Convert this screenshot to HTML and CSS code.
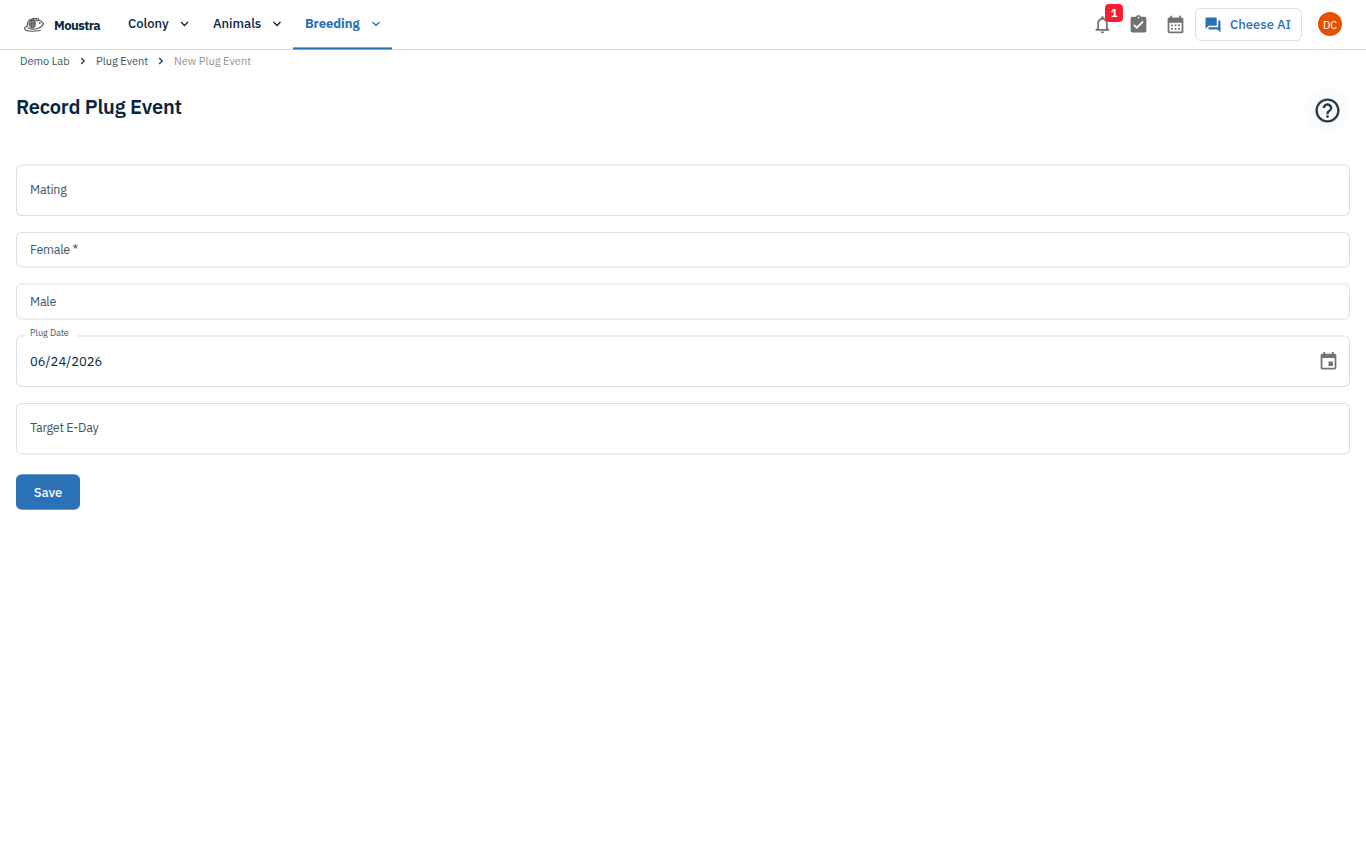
FILE: index.html
```html
<!DOCTYPE html>
<html lang="en">
<head>
  <meta charset="UTF-8" />
  <meta name="viewport" content="width=device-width, initial-scale=1.0"/>
  <title>Moustra - Record Plug Event</title>
  <link rel="stylesheet" href="styles.css">
</head>
<body>
  <header class="topbar">
    <a class="brand" href="#">
      <svg class="logo" viewBox="0 0 20 16" fill="none" stroke="#555" stroke-width="1.1" stroke-linecap="round">
        <path d="M7 2.200C4.500 2.600 3 5.500 3.400 9"/>
        <path d="M3.200 9.300C.2 9.800-.2 12 2 13.200c3.500 1.500 8.500 1.200 14.500.3"/>
        <path d="M4 10.800c2.500 1.700 7 1.500 10.500.5 2.500-.8 4.300-3 5-4.800-1-1.800-2.600-2.800-4.800-3.600"/>
        <ellipse cx="8.200" cy="6.500" rx="3" ry="4.200" fill="#999"/>
        <path d="M7.500 2.800v7.500M9.300 3v7M5 6.800h6" stroke-width=".8"/>
        <path d="M8.500 1.800c1.500-.6 2.800-.4 3.800.4"/>
        <circle cx="13.300" cy="2.600" r="1.300"/>
        <circle cx="15.800" cy="6" r=".4" fill="#333"/>
      </svg>
      <span class="brand-name">Moustra</span>
    </a>

    <nav class="nav">
      <button class="nav-item colony"><span>Colony</span><svg class="chevron" viewBox="0 0 10 6"><path d="M1 1l3.500 3.500L8 1"/></svg></button>
      <button class="nav-item animals"><span>Animals</span><svg class="chevron" viewBox="0 0 10 6"><path d="M1.500 1L5 4.500 8.500 1"/></svg></button>
      <button class="nav-item breeding active"><span>Breeding</span><svg class="chevron" viewBox="0 0 10 6"><path d="M1.500 1L5 4.500 8.500 1"/></svg></button>
    </nav>

    <div class="actions">
      <button class="icon-btn">
        <svg viewBox="0 0 24 24"><path d="M12 22c1.100 0 2-.9 2-2h-4c0 1.100.9 2 2 2zm6-6v-5c0-3.070-1.630-5.640-4.500-6.320V4c0-.83-.67-1.500-1.500-1.500s-1.500.67-1.500 1.500v.68C7.640 5.360 6 7.920 6 11v5l-2 2v1h16v-1l-2-2zm-2 1H8v-6c0-2.480 1.510-4.500 4-4.500s4 2.020 4 4.500v6z"/></svg>
        <span class="badge">1</span>
      </button>
      <button class="icon-btn">
        <svg viewBox="0 0 24 24"><path d="M19 3h-4.180C14.400 1.840 13.300 1 12 1s-2.400.84-2.820 2H5c-1.100 0-2 .9-2 2v14c0 1.100.9 2 2 2h14c1.100 0 2-.9 2-2V5c0-1.100-.9-2-2-2zm-7 0c.55 0 1 .45 1 1s-.45 1-1 1-1-.45-1-1 .45-1 1-1zm-2 14l-4-4 1.410-1.410L10 14.170l6.590-6.590L18 9l-8 8z"/></svg>
      </button>
      <button class="icon-btn calendar-btn">
        <svg viewBox="0 0 24 24"><path fill-rule="evenodd" d="M19 4h-1V2h-2v2H8V2H6v2H5c-1.110 0-2 .9-2 2v14c0 1.100.89 2 2 2h14c1.100 0 2-.9 2-2V6c0-1.100-.9-2-2-2zm0 16H5V10h14v10zM7 12h2v2H7zm4 0h2v2h-2zm4 0h2v2h-2zM7 16h2v2H7zm4 0h2v2h-2zm4 0h2v2h-2z"/></svg>
      </button>
      <button class="cheese-btn">
        <svg viewBox="0 0 24 24"><path d="M21 6h-2v9H6v2c0 .55.45 1 1 1h11l4 4V7c0-.55-.45-1-1-1zm-4 6V3c0-.55-.45-1-1-1H3c-.55 0-1 .45-1 1v14l4-4h10c.55 0 1-.45 1-1z"/></svg>
        <span>Cheese AI</span>
      </button>
      <div class="avatar">DC</div>
    </div>
  </header>

  <div class="breadcrumbs">
    <a class="crumb-lab" href="#">Demo Lab</a>
    <svg viewBox="0 0 6 8"><path d="M1.200 1l3 3-3 3"/></svg>
    <a class="crumb-plug" href="#">Plug Event</a>
    <svg viewBox="0 0 6 8"><path d="M1.200 1l3 3-3 3"/></svg>
    <span class="current">New Plug Event</span>
  </div>

  <main>
    <div class="page-head">
      <h1>Record Plug Event</h1>
      <button class="help-btn">
        <svg viewBox="0 0 24 24"><path d="M11 18h2v-2h-2v2zm1-16C6.480 2 2 6.480 2 12s4.480 10 10 10 10-4.480 10-10S17.520 2 12 2zm0 18c-4.410 0-8-3.590-8-8s3.590-8 8-8 8 3.590 8 8-3.590 8-8 8zm0-14c-2.210 0-4 1.790-4 4h2c0-1.100.9-2 2-2s2 .9 2 2c0 2-3 1.750-3 5h2c0-2.250 3-2.500 3-5 0-2.210-1.790-4-4-4z"/></svg>
      </button>
    </div>

    <form>
      <div class="field mating"><label>Mating</label></div>
      <div class="field female"><label>Female *</label></div>
      <div class="field male"><label>Male</label></div>
      <div class="field date">
        <label class="float-label">Plug Date</label>
        <span class="value">06/24/2026</span>
        <svg class="date-icon" viewBox="0 0 24 24"><path d="M17 12h-5v5h5v-5zM16 1v2H8V1H6v2H5c-1.110 0-1.990.9-1.990 2L3 19c0 1.100.89 2 2 2h14c1.100 0 2-.9 2-2V5c0-1.100-.9-2-2-2h-1V1h-2zm3 18H5V8h14v11z"/></svg>
      </div>
      <div class="field target"><label>Target E-Day</label></div>
      <button type="button" class="save-btn">Save</button>
    </form>
  </main>
</body>
</html>
```
FILE: styles.css
```css
* {
  box-sizing: border-box;
}

body {
  margin: 0;
  background-color: #fff;
  color: #05263f;
  font-family: 'IBM Plex Sans', Roboto, 'Noto Sans', sans-serif;
  font-size: 12px;
}

button {
  padding: 0;
  border: none;
  background: none;
  color: inherit;
  font-family: inherit;
  cursor: pointer;
}

a {
  color: inherit;
  text-decoration: none;
}

svg {
  display: block;
  flex-shrink: 0;
}

.topbar {
  display: flex;
  height: 50px;
  padding-left: 24px;
  padding-right: 24px;
  border-bottom: 1px solid #d9dbdc;
}

.brand {
  display: flex;
  align-items: center;
  width: 92px;
}

.logo {
  width: 20px;
  height: 16px;
  margin-right: 10px;
}

.brand-name {
  padding-top: 2px;
  font-size: 13px;
  font-weight: 700;
  letter-spacing: -0.5px;
}

.nav {
  display: flex;
}

.nav-item {
  display: flex;
  justify-content: space-between;
  align-items: center;
  height: 50px;
  padding: 0 11px 2px 12px;
  border-bottom: 1px solid transparent;
  font-size: 13px;
  font-weight: 500;
}

.colony {
  width: 85px;
}

.animals {
  width: 92px;
}

.breeding {
  width: 99px;
}

.nav-item.active {
  color: #2a71b8;
  border-bottom-color: #7fa9d3;
  box-shadow: inset 0 -1px #2a71b8, inset 0 -2px #7fa9d3;
  font-weight: 700;
  letter-spacing: -0.05px;
}

.chevron {
  width: 10px;
  height: 6px;
  fill: none;
  stroke: currentColor;
  stroke-width: 1.3;
}

.actions {
  display: flex;
  align-items: center;
  margin-left: auto;
}

.icon-btn {
  position: relative;
  width: 36px;
  color: #737373;
}

.icon-btn svg {
  width: 21px;
  height: 21px;
  margin-left: 7px;
  fill: currentColor;
}

.calendar-btn svg {
  margin-left: 7.5px;
}

.badge {
  position: absolute;
  top: -10px;
  right: -2px;
  width: 18px;
  height: 18px;
  border-radius: 4px;
  background: #f8202e;
  color: #fff;
  font-size: 11px;
  font-weight: 700;
  line-height: 18px;
}

.cheese-btn {
  display: flex;
  align-items: center;
  width: 107px;
  height: 33px;
  margin: 0 16px 0 2px;
  padding-left: 8px;
  border: 1px solid #dadfe4;
  border-radius: 6px;
  color: #2a71b8;
  font-size: 13px;
  font-weight: 500;
}

.cheese-btn svg {
  width: 18px;
  height: 18px;
  margin-right: 8px;
  fill: currentColor;
}

.avatar {
  width: 24px;
  height: 24px;
  margin-top: -1px;
  border-radius: 50%;
  background: #e65100;
  color: #fff;
  font-size: 11px;
  line-height: 26px;
  text-align: center;
}

.breadcrumbs {
  display: flex;
  align-items: center;
  height: 22px;
  padding-left: 20px;
  color: #3b5266;
  font-size: 11px;
  white-space: nowrap;
}

.breadcrumbs svg {
  width: 6px;
  height: 8px;
  margin: 0 10px;
  fill: none;
  stroke: #2a455a;
  stroke-width: 1.4;
}

.crumb-lab {
  width: 50px;
}

.crumb-plug {
  width: 52px;
}

.breadcrumbs .current {
  color: #949494;
}

main {
  padding: 0 16px;
}

.page-head {
  display: flex;
  justify-content: space-between;
  height: 92px;
  padding-top: 16px;
}

h1 {
  margin: 7px 0 0;
  font-size: 20px;
  font-weight: 600;
  line-height: 24px;
  letter-spacing: -0.18px;
}

.help-btn {
  display: flex;
  justify-content: center;
  align-items: center;
  width: 44px;
  height: 44px;
  margin-right: 1px;
  border-radius: 50%;
  background: #fafcfc;
  color: #243d52;
}

.help-btn svg {
  width: 29px;
  height: 29px;
  fill: currentColor;
}

.field {
  position: relative;
  display: flex;
  align-items: center;
  height: 52px;
  margin-bottom: 16px;
  padding: 0 10px 0 13px;
  border: 1px solid #dadfe4;
  border-radius: 6px;
  color: #3f5468;
  font-size: 12.5px;
  letter-spacing: -0.25px;
}

.field label {
  margin-top: -2px;
}

.mating,
.male,
.date {
  border-top: 2px solid #eceeef;
}

.female,
.male,
.target {
  border-bottom: 2px solid #eceeef;
}

.female {
  height: 36px;
  margin-bottom: 15px;
}

.male {
  height: 37px;
  margin-bottom: 15px;
}

.target {
  margin-bottom: 19px;
  padding-bottom: 2px;
}

.mating {
  padding-bottom: 2px;
}

.field .float-label {
  position: absolute;
  top: -11px;
  left: 8px;
  margin: 0;
  padding: 0 8px 0 5px;
  background: #fff;
  font-size: 9px;
  line-height: 14px;
  letter-spacing: 0;
}

.value {
  color: #05263f;
  font-size: 13px;
  letter-spacing: 0;
}

.date-icon {
  width: 21px;
  height: 21px;
  margin-left: auto;
  fill: #737373;
}

.save-btn {
  display: block;
  width: 64px;
  height: 36px;
  border: 1px solid #6a9ccd;
  border-width: 1px 0;
  border-radius: 6px;
  background: #2a71b8;
  color: #fff;
  font-size: 13px;
  font-weight: 500;
}
```
